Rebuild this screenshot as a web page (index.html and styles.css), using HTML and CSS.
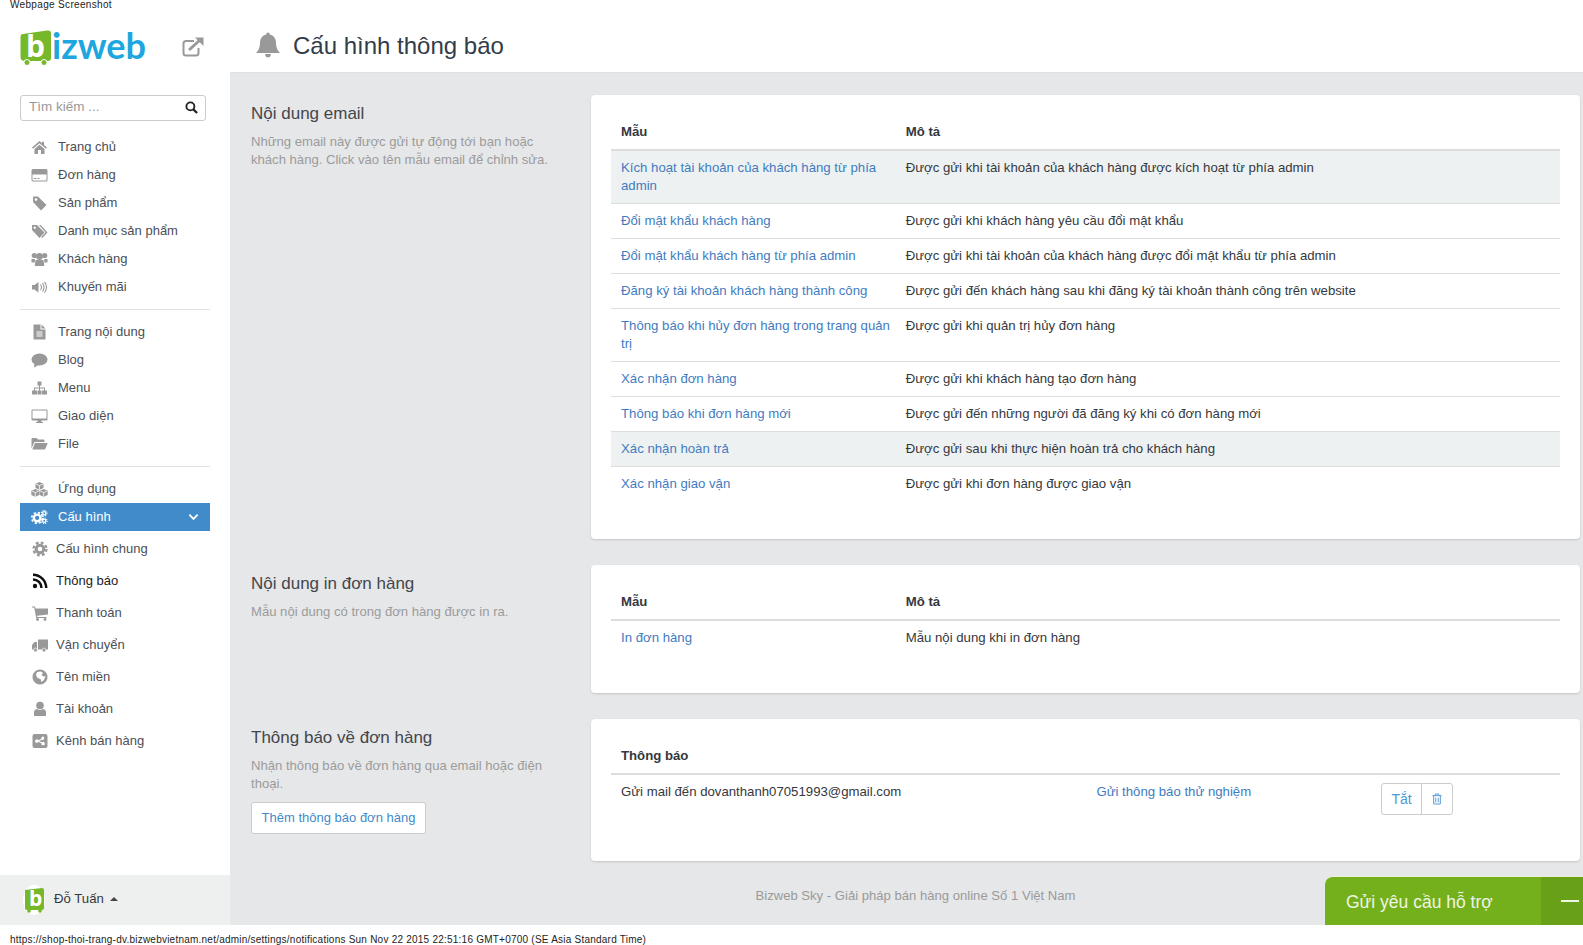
FILE: index.html
```html
<!DOCTYPE html>
<html lang="en">
  <head>
    <meta charset="UTF-8" />
    <title>Cấu hình thông báo</title>
    <link rel="stylesheet" href="styles.css">
  </head>
  <body>
    <div class="shot-caption top-caption">Webpage Screenshot</div>
    <div class="app">
      <div class="sidebar">
        <div class="brand">
          <div class="logo">
            <svg class="logo-cart" viewBox="0 0 32 36">
              <path fill="#76b82a" d="M3 4 L27 0.500 Q31 0 31 3 V28 Q31 31 28 31 H5 Q0.500 31 0.500 27 V7 Q0.500 4 3 4z"/>
              <circle cx="7" cy="32.500" r="3" fill="#76b82a" stroke="#fff"/>
              <circle cx="24" cy="32.500" r="3" fill="#76b82a" stroke="#fff"/>
              <text x="6" y="27" class="logo-b">b</text>
            </svg>
            <span class="logo-text">izweb</span>
          </div>
          <svg class="brand-link" viewBox="0 0 22 20" fill="none" stroke="#999" stroke-width="2">
            <path d="M12 4 H4 Q1.500 4 1.500 6.500 V16 Q1.500 18.500 4 18.500 H14 Q16.500 18.500 16.500 16 V11"/>
            <path d="M7 13 L18 3" stroke-width="3"/>
            <path d="M13 0.500 H21.500 V9z" fill="#999" stroke="none"/>
          </svg>
        </div>

        <div class="search-box">
          <span>Tìm kiếm ...</span>
          <svg class="search-icon" viewBox="0 0 14 14" fill="none" stroke="#222" stroke-width="2">
            <circle cx="5.800" cy="5.800" r="4.300"/>
            <path d="M9 9 L13 13" stroke-width="2.400"/>
          </svg>
        </div>

        <ul class="nav">
          <li><svg class="icon" viewBox="0 0 16 16"><path d="M8 2 L0.500 8.600 1.500 9.800 8 4.200 14.500 9.800 15.500 8.600 12.500 6 V2.800 H10.500 V4.200z M3 10 L8 5.700 13 10 V15 H9.500 V11 H6.500 V15 H3z"/></svg>Trang chủ</li>
          <li><svg class="icon" viewBox="0 0 16 16"><path fill-rule="evenodd" d="M1.500 2 H14.500 Q16 2 16 3.500 V13 Q16 14.500 14.500 14.500 H1.500 Q0 14.500 0 13 V3.500 Q0 2 1.500 2z M1 7.500 V12.800 Q1 13.500 1.700 13.500 H14.300 Q15 13.500 15 12.800 V7.500z M2 11 H5 V12 H2z M6 11 H8 V12 H6z"/></svg>Đơn hàng</li>
          <li><svg class="icon" viewBox="0 0 16 16"><path fill-rule="evenodd" d="M1.500 1.500 H6.500 L15 10 9.500 15.500 1.500 7z M4.500 3.200 A1.300 1.300 0 1 0 4.501 3.200z"/></svg>Sản phẩm</li>
          <li><svg class="icon" viewBox="0 0 16 16"><path fill-rule="evenodd" d="M0.500 2 H5.500 L13 9.500 8 15 0.500 7z M3.200 3.500 A1.200 1.200 0 1 0 3.201 3.500z"/><path d="M7.500 2 H9.200 L16 9.500 10.800 15 9.800 14 14 9.500z"/></svg>Danh mục sản phẩm</li>
          <li><svg class="icon" viewBox="0 0 16 16"><circle cx="2.800" cy="4.500" r="2.600"/><circle cx="13.200" cy="4.500" r="2.600"/><circle cx="8" cy="5.500" r="3.400"/><path d="M0 8 H3.500 L3.200 11.500 H0z M12.800 8 H16 V11.500 H12.800z M4 9 H12 L12.800 15 H3.200z"/></svg>Khách hàng</li>
          <li><svg class="icon" viewBox="0 0 16 16"><path d="M0.500 6 H3 L7 3 V13.500 L3 10.500 H0.500z"/><path d="M9 5.500 Q11 8.200 9 11 M11 4 Q14 8.200 11 12.500 M13 2.800 Q17 8.200 13 13.800" fill="none" stroke="#999" stroke-width="1.100"/></svg>Khuyến mãi</li>
        </ul>
        <div class="nav-divider"></div>
        <ul class="nav">
          <li><svg class="icon" viewBox="0 0 16 16"><path d="M2 0.500 H9 V5.500 H14 V15.500 H2z M10 0.500 L14 4.500 H10z"/><path d="M5 8 H11 M5 10 H11 M5 12 H11" stroke="#fff" stroke-width="1"/></svg>Trang nội dung</li>
          <li><svg class="icon" viewBox="0 0 16 16"><ellipse cx="8" cy="7.500" rx="8" ry="6"/><path d="M3 11 L2.500 15.500 8 12.500z"/></svg>Blog</li>
          <li><svg class="icon" viewBox="0 0 16 16"><path d="M6 1.500 H10 V5.500 H8.500 V7.500 H13.500 V10.500 H15.500 V14.500 H10.500 V10.500 H12.500 V8.500 H8.500 V10.500 H10 V14.500 H6 V10.500 H7.500 V8.500 H3.500 V10.500 H5.500 V14.500 H0.500 V10.500 H2.500 V7.500 H7.500 V5.500 H6z"/></svg>Menu</li>
          <li><svg class="icon" viewBox="0 0 16 16"><path fill-rule="evenodd" d="M1 1.500 H15 Q16 1.500 16 2.500 V11.500 Q16 12.500 15 12.500 H10 V14 H11.500 V15 H4.500 V14 H6 V12.500 H1 Q0 12.500 0 11.500 V2.500 Q0 1.500 1 1.500z M1 2.500 V10.500 H15 V2.500z"/></svg>Giao diện</li>
          <li><svg class="icon" viewBox="0 0 16 16"><path d="M0 12.500 V3 Q0 2 1 2 H5 L6.500 3.500 H12 Q13 3.500 13 4.500 V6 H3.500 Q2.800 6 2.500 6.700z M3.500 7 H15.500 Q16.300 7 16 7.800 L13.500 13.500 H0.800z"/></svg>File</li>
        </ul>
        <div class="nav-divider"></div>
        <ul class="nav nav-apps">
          <li><svg class="icon cubes" viewBox="0 0 18 16"><path d="M9 1 L13 2.800 V7 L9 8.800 5 7 V2.800z M4.800 8 L8.800 9.800 V14 L4.800 15.800 0.800 14 V9.800z M13.200 8 L17.200 9.800 V14 L13.200 15.800 9.200 14 V9.800z"/><path d="M5.500 3 L9 4.600 12.500 3 M9 4.600 V8.500 M1.300 10 L4.800 11.600 8.300 10 M4.800 11.600 V15.500 M9.700 10 L13.200 11.600 16.700 10 M13.200 11.600 V15.500" fill="none" stroke="#fff" stroke-width="0.800"/></svg>Ứng dụng</li>
          <li class="active">
            <svg class="icon cogs" viewBox="0 0 18 16">
              <circle cx="6.500" cy="9" r="3.500" fill="none" stroke="#fff" stroke-width="2.600"/>
              <circle cx="6.500" cy="9" r="5.700" fill="none" stroke="#fff" stroke-width="1.800" stroke-dasharray="2.400 2.080"/>
              <circle cx="14" cy="4" r="1.700" fill="none" stroke="#fff" stroke-width="1.400"/>
              <circle cx="14" cy="4" r="3" fill="none" stroke="#fff" stroke-width="1.100" stroke-dasharray="1.300 1.050"/>
              <circle cx="14" cy="12" r="1.700" fill="none" stroke="#fff" stroke-width="1.400"/>
              <circle cx="14" cy="12" r="3" fill="none" stroke="#fff" stroke-width="1.100" stroke-dasharray="1.300 1.050"/>
            </svg>
            Cấu hình
            <svg class="chevron" viewBox="0 0 12 8" fill="none" stroke="#fff" stroke-width="2"><path d="M1.500 1.500 L6 6 10.500 1.500"/></svg>
          </li>
        </ul>
        <ul class="subnav">
          <li><svg class="icon" viewBox="0 0 16 16"><circle cx="8" cy="8" r="3.800" fill="none" stroke="#999" stroke-width="3"/><circle cx="8" cy="8" r="6.400" fill="none" stroke="#999" stroke-width="2.400" stroke-dasharray="2.800 2.230"/></svg>Cấu hình chung</li>
          <li class="current"><svg class="icon" viewBox="0 0 16 16"><circle cx="3" cy="13" r="2.200"/><path d="M1 6.500 A8.500 8.500 0 0 1 9.500 15 M1 1.800 A13.200 13.200 0 0 1 14.200 15" fill="none" stroke="#111" stroke-width="2.500"/></svg>Thông báo</li>
          <li><svg class="icon" viewBox="0 0 16 16"><path d="M0 1.500 H3 L3.500 3.500 H16 V9.500 L5 10.800 5.300 12 H14.500 V13 H4.200 L2.200 2.500 H0z"/><circle cx="5.500" cy="14.500" r="1.400"/><circle cx="13" cy="14.500" r="1.400"/></svg>Thanh toán</li>
          <li><svg class="icon" viewBox="0 0 16 16"><path fill-rule="evenodd" d="M6 2.500 H16 V12.500 H6z M5 5 H2.500 L0 8 V12.500 H5z"/><circle cx="3.500" cy="13" r="1.900" stroke="#fff" stroke-width="0.600"/><circle cx="12" cy="13" r="1.900" stroke="#fff" stroke-width="0.600"/></svg>Vận chuyển</li>
          <li><svg class="icon" viewBox="0 0 16 16"><path fill-rule="evenodd" d="M8 0.500 A7.500 7.500 0 1 0 8.001 0.500z M5 3 L9 2.500 11 4 9.500 6 11.500 7.500 13.500 7 12 11 9.500 13 8.500 10 5.500 9 4 6z"/></svg>Tên miền</li>
          <li><svg class="icon" viewBox="0 0 16 16"><circle cx="8" cy="4.500" r="3.800"/><path d="M2 15 V11.500 Q2 8.500 5 8 Q8 10 11 8 Q14 8.500 14 11.500 V15z"/></svg>Tài khoản</li>
          <li><svg class="icon" viewBox="0 0 16 16"><path fill-rule="evenodd" d="M2.500 1 H13.500 Q15.500 1 15.500 3 V13 Q15.500 15 13.500 15 H2.500 Q0.500 15 0.500 13 V3 Q0.500 1 2.500 1z M11 3.500 A1.700 1.700 0 0 0 9.400 5.800 L6.300 7.300 A1.700 1.700 0 1 0 6.300 8.800 L9.400 10.300 A1.700 1.700 0 1 0 10 9.300 L7 8 10 6.800 A1.700 1.700 0 1 0 11 3.500z"/></svg>Kênh bán hàng</li>
        </ul>

        <div class="user-bar">
          <svg class="user-logo" viewBox="0 0 22 30">
            <ellipse cx="11" cy="15" rx="11" ry="15" fill="#fff"/>
            <path fill="#76b82a" d="M2 5 L19 3 Q21 3 21 5 V23 Q21 25 19 25 H4 Q2 25 2 23z"/>
            <circle cx="6" cy="26" r="1.800" fill="#76b82a"/>
            <circle cx="17" cy="26" r="1.800" fill="#76b82a"/>
            <text x="6" y="21" class="user-logo-b">b</text>
          </svg>
          <span>Đỗ Tuấn</span>
          <span class="caret-up"></span>
        </div>
      </div>

      <div class="content">
        <div class="page-header">
          <svg class="bell" viewBox="0 0 24 26"><path d="M12 0.500 Q13.800 0.500 13.800 2.500 Q20 4 20 11 Q20 17 24 21 H0 Q4 17 4 11 Q4 4 10.200 2.500 Q10.200 0.500 12 0.500z M9 22 H15 Q14.500 25.500 12 25.500 Q9.500 25.500 9 22z"/></svg>
          <h1>Cấu hình thông báo</h1>
        </div>

        <div class="main">
          <div class="section">
            <div class="section-info">
              <h3>Nội dung email</h3>
              <p>Những email này được gửi tự động tới bạn hoặc khách hàng. Click vào tên mẫu email để chỉnh sửa.</p>
            </div>
            <div class="card">
              <table>
                <colgroup><col class="col-name"><col></colgroup>
                <thead>
                  <tr><th>Mẫu</th><th>Mô tả</th></tr>
                </thead>
                <tbody>
                  <tr class="hover"><td><a>Kích hoạt tài khoản của khách hàng từ phía admin</a></td><td>Được gửi khi tài khoản của khách hàng được kích hoạt từ phía admin</td></tr>
                  <tr><td><a>Đổi mật khẩu khách hàng</a></td><td>Được gửi khi khách hàng yêu cầu đổi mật khẩu</td></tr>
                  <tr><td><a>Đổi mật khẩu khách hàng từ phía admin</a></td><td>Được gửi khi tài khoản của khách hàng được đổi mật khẩu từ phía admin</td></tr>
                  <tr><td><a>Đăng ký tài khoản khách hàng thành công</a></td><td>Được gửi đến khách hàng sau khi đăng ký tài khoản thành công trên website</td></tr>
                  <tr><td><a>Thông báo khi hủy đơn hàng trong trang quản trị</a></td><td>Được gửi khi quản trị hủy đơn hàng</td></tr>
                  <tr><td><a>Xác nhận đơn hàng</a></td><td>Được gửi khi khách hàng tạo đơn hàng</td></tr>
                  <tr><td><a>Thông báo khi đơn hàng mới</a></td><td>Được gửi đến những người đã đăng ký khi có đơn hàng mới</td></tr>
                  <tr class="hover"><td><a>Xác nhận hoàn trả</a></td><td>Được gửi sau khi thực hiện hoàn trả cho khách hàng</td></tr>
                  <tr><td><a>Xác nhận giao vận</a></td><td>Được gửi khi đơn hàng được giao vận</td></tr>
                </tbody>
              </table>
            </div>
          </div>

          <div class="section">
            <div class="section-info">
              <h3>Nội dung in đơn hàng</h3>
              <p>Mẫu nội dung có trong đơn hàng được in ra.</p>
            </div>
            <div class="card">
              <table>
                <colgroup><col class="col-name"><col></colgroup>
                <thead>
                  <tr><th>Mẫu</th><th>Mô tả</th></tr>
                </thead>
                <tbody>
                  <tr><td><a>In đơn hàng</a></td><td>Mẫu nội dung khi in đơn hàng</td></tr>
                </tbody>
              </table>
            </div>
          </div>

          <div class="section">
            <div class="section-info">
              <h3>Thông báo về đơn hàng</h3>
              <p>Nhận thông báo về đơn hàng qua email hoặc điện thoại.</p>
              <button class="add-button">Thêm thông báo đơn hàng</button>
            </div>
            <div class="card">
              <table>
                <colgroup><col class="col-half"><col class="col-name"><col></colgroup>
                <thead>
                  <tr><th colspan="3">Thông báo</th></tr>
                </thead>
                <tbody>
                  <tr>
                    <td>Gửi mail đến dovanthanh07051993@gmail.com</td>
                    <td><a>Gửi thông báo thử nghiệm</a></td>
                    <td>
                      <div class="btn-group">
                        <button class="btn-off">Tắt</button>
                        <button class="btn-trash">
                          <svg viewBox="0 0 12 14" fill="none" stroke="#5b9bd5" stroke-width="1.200"><path d="M0.500 3 H11.500 M4 3 V1 H8 V3 M2 3 V13 H10 V3 M4.500 5.500 V11 M7.500 5.500 V11"/></svg>
                        </button>
                      </div>
                    </td>
                  </tr>
                </tbody>
              </table>
            </div>
          </div>

          <div class="footer-note">Bizweb Sky - Giải pháp bán hàng online Số 1 Việt Nam</div>
        </div>

        <div class="support">
          <span class="support-label">Gửi yêu cầu hỗ trợ</span>
          <span class="support-toggle"><i></i></span>
        </div>
      </div>
    </div>
    <div class="shot-caption bottom-caption">https://shop-thoi-trang-dv.bizwebvietnam.net/admin/settings/notifications Sun Nov 22 2015 22:51:16 GMT+0700 (SE Asia Standard Time)</div>
  </body>
</html>
```

FILE: styles.css
```css
html,
body {
  height: 100%;
}

body {
  font-family: "Liberation Sans", Arial, sans-serif;
  font-size: 13.2px;
  line-height: 18px;
  margin: 0;
  padding: 0;
  background-color: white;
  color: #35383d;
  display: flex;
  flex-direction: column;
  overflow: hidden;
}

.shot-caption {
  font-size: 10px;
  line-height: 12px;
  color: #222;
  padding-left: 10px;
  letter-spacing: 0.23px;
}

.top-caption {
  height: 12px;
  margin-top: -1px;
  letter-spacing: 0.33px;
}

.bottom-caption {
  height: 20px;
  padding-top: 9px;
  box-sizing: border-box;
}

.app {
  flex: 1;
  display: flex;
  min-height: 0;
}

/* sidebar */
.sidebar {
  width: 230px;
  flex-shrink: 0;
  display: flex;
  flex-direction: column;
  position: relative;
}

.brand {
  height: 84px;
  padding: 19px 26px 0 20px;
  box-sizing: border-box;
  display: flex;
  justify-content: space-between;
  align-items: flex-start;
}

.logo {
  display: flex;
  align-items: flex-start;
  height: 36px;
}

.logo-cart {
  width: 32px;
  height: 36px;
  overflow: visible;
}

.logo-b {
  font-family: "Open Sans", sans-serif;
  font-weight: 700;
  font-size: 30px;
  fill: white;
}

.logo-text {
  font-family: "Lato", sans-serif;
  font-weight: 700;
  font-size: 36px;
  line-height: 30px;
  color: #1ea6df;
}

.brand-link {
  width: 22px;
  height: 20px;
  margin-top: 7px;
}

.search-box {
  width: 186px;
  height: 26px;
  margin-left: 20px;
  box-sizing: border-box;
  border: 1px solid #ccc;
  border-radius: 3px;
  padding: 0 8px 2px 8px;
  display: flex;
  align-items: center;
  justify-content: space-between;
  color: #9a9a9a;
  font-size: 13.5px;
}

.search-icon {
  width: 13px;
  height: 13px;
  margin-right: -1px;
}

.nav,
.subnav {
  list-style: none;
  margin: 0;
  padding: 0;
}

.nav {
  margin-top: 12px;
  width: 190px;
  margin-left: 20px;
  font-size: 13px;
}

.nav-divider + .nav {
  margin-top: 9px;
}

.nav li {
  height: 28px;
  display: flex;
  align-items: center;
  padding-left: 11px;
  color: #4b4f56;
}

.icon {
  width: 17px;
  height: 16px;
  margin-right: 10px;
  fill: #999;
  flex-shrink: 0;
}

.nav .cubes {
  width: 19px;
  margin-left: -1px;
  margin-right: 9px;
}

.nav li.active {
  background-color: #428bca;
  color: white;
  position: relative;
}

.nav li.active .icon {
  fill: white;
}

.chevron {
  width: 11px;
  height: 8px;
  margin-left: auto;
  margin-right: 11px;
}

.nav-divider {
  width: 190px;
  height: 1px;
  margin: 8px 0 -1px 20px;
  background-color: #e1e1e1;
}

.nav + .subnav {
  margin-top: 2px;
  font-size: 13px;
}

.subnav li {
  height: 32px;
  display: flex;
  align-items: center;
  padding-left: 32px;
  color: #4b4f56;
}

.subnav .icon {
  width: 16px;
  margin-right: 8px;
}

.subnav li.current {
  color: #1b1b1b;
}

.subnav li.current .icon {
  fill: #111;
}

.user-bar {
  margin-top: auto;
  height: 50px;
  background-color: #eef0f0;
  display: flex;
  align-items: center;
  padding-left: 23px;
  padding-bottom: 2px;
  box-sizing: border-box;
}

.user-logo {
  width: 22px;
  height: 30px;
  margin-right: 9px;
  margin-bottom: -2px;
}

.user-logo-b {
  font-family: "Open Sans", sans-serif;
  font-weight: 700;
  font-size: 21px;
  fill: white;
}

.caret-up {
  width: 0;
  height: 0;
  margin-left: 6px;
  border-left: 4px solid transparent;
  border-right: 4px solid transparent;
  border-bottom: 4px solid #444;
}

/* content */
.content {
  flex: 1;
  min-width: 0;
  display: flex;
  flex-direction: column;
  position: relative;
  overflow: hidden;
}

.page-header {
  height: 62px;
  display: flex;
  align-items: center;
  padding-left: 26px;
  box-sizing: border-box;
  border-bottom: 1px solid #dfe0e2;
}

.bell {
  width: 24px;
  height: 26px;
  fill: #999;
  margin-right: 13px;
  margin-top: 7px;
}

h1 {
  font-size: 24px;
  font-weight: normal;
  line-height: 30px;
  margin: 8px 0 0 0;
  color: #333c49;
}

.main {
  flex: 1;
  background-color: #e6e7e9;
  padding: 22px 3px 0 21px;
  min-height: 0;
}

.section {
  display: flex;
  margin-bottom: 26px;
}

.section-info {
  width: 340px;
  flex-shrink: 0;
  padding-right: 25px;
  box-sizing: border-box;
}

.section-info h3 {
  font-size: 17px;
  font-weight: normal;
  line-height: 20px;
  margin: 9px 0 9px 0;
  color: #43464b;
}

.section-info p {
  margin: 0;
  color: #9b9b9b;
  font-size: 13.1px;
}

.card {
  flex: 1;
  background-color: white;
  border-radius: 4px;
  padding: 20px 20px 38px 20px;
  box-shadow: 0 1px 2px rgba(0, 0, 0, 0.15);
}

table {
  width: 100%;
  border-collapse: collapse;
  table-layout: fixed;
}

th {
  text-align: left;
  padding: 8px 10px;
  font-weight: bold;
  color: #35383d;
  border-bottom: 2px solid #ddd;
}

td {
  padding: 8px 10px;
  vertical-align: top;
  border-top: 1px solid #ddd;
}

tbody td:first-child {
  padding-right: 4px;
}

tbody tr:first-child td {
  border-top: 0;
}

.col-name {
  width: 30%;
}

.col-half {
  width: 50.1%;
}

tr.hover td {
  background-color: #eef1f2;
}

a {
  color: #3f7cbf;
}

.add-button {
  display: block;
  margin-top: 9px;
  width: 175px;
  height: 32px;
  padding: 0 0 2px 0;
  font-family: inherit;
  font-size: 13px;
  color: #428bca;
  background-color: white;
  border: 1px solid #ccc;
  border-radius: 3px;
}

.btn-group {
  display: flex;
  width: 72px;
  height: 32px;
}

.btn-group button {
  height: 32px;
  padding: 0;
  background-color: white;
  border: 1px solid #ccc;
  font-family: inherit;
  font-size: 14px;
  color: #4a9bd4;
}

.btn-off {
  width: 41px;
  border-radius: 3px 0 0 3px;
}

.btn-trash {
  width: 32px;
  margin-left: -1px;
  border-radius: 0 3px 3px 0;
  display: flex;
  align-items: center;
  justify-content: center;
}

.btn-trash svg {
  width: 10px;
  height: 12px;
}

.footer-note {
  text-align: center;
  color: #9a9a9a;
  font-size: 13.1px;
}

.support {
  position: absolute;
  right: 0;
  bottom: 0;
  width: 258px;
  height: 49px;
  display: flex;
  background-color: #74b01c;
  border-top: 1px solid #e9f1dc;
  box-sizing: border-box;
  border-top-left-radius: 8px;
  color: #eef5e2;
}

.support-label {
  flex: 1;
  font-size: 17.5px;
  line-height: 50px;
  padding-left: 21px;
}

.support-toggle {
  width: 42px;
  background-color: #68a017;
  display: flex;
  align-items: center;
  justify-content: flex-end;
  padding-right: 4px;
  box-sizing: border-box;
}

.support-toggle i {
  width: 18px;
  height: 2px;
  background-color: #eef5e2;
}
```
